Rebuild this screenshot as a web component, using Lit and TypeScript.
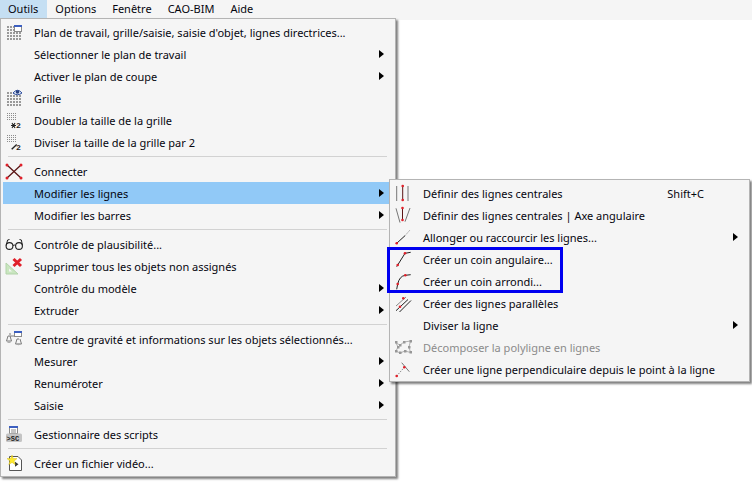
import { LitElement, html, css, svg } from "lit";
import { customElement } from "lit/decorators.js";

const dots = (x0: number, y0: number, nx: number, ny: number, fill = "#999", step = 3, size = 2) => {
  const out = [];
  for (let j = 0; j < ny; j++)
    for (let i = 0; i < nx; i++)
      out.push(svg`<rect x=${x0 + i * step} y=${y0 + j * step} width=${size} height=${size} fill=${fill}></rect>`);
  return out;
};
const red = (x: number, y: number, r = 1.3) => svg`<circle cx=${x} cy=${y} r=${r} fill="#e0202a"></circle>`;
const win = (x: number, y: number, w: number, h: number) => svg`
  <rect x=${x + 0.5} y=${y + 0.5} width=${w - 1} height=${h - 1} fill="#fff" stroke="#8a8a8a"></rect>
  <rect x=${x} y=${y} width=${w} height="2" fill="#3c5fc0"></rect>`;

const icons: Record<string, unknown> = {
  plan: svg`${dots(2, 5, 5, 5)}${win(9, 4, 8, 7)}`,
  grille: svg`${dots(2, 5, 5, 5)}
    <path d="M8 6 Q12.5 0.5 17 6 Q12.5 9.5 8 6Z" fill="#dfe8f7" stroke="#2f4f9f"></path><circle cx="12.5" cy="5" r="1.8" fill="#27407f"></circle>`,
  double: svg`${dots(2, 4, 5, 4, "#8c8c8c", 2, 1)}
    <path d="M6 16.5 H11 M7 14 L10 19 M10 14 L7 19" stroke="#222" stroke-width="1.1"></path>
    <text x="11.2" y="19.3" class="tiny">2</text>`,
  half: svg`${dots(2, 4, 5, 4, "#8c8c8c", 2, 1)}
    <path d="M6.7 18.3 L11.7 13.5" stroke="#222" stroke-width="1.4"></path><text x="11.2" y="19.3" class="tiny">2</text>`,
  connect: svg`<path d="M2 5 L16 18 M16 5 L2 18" stroke="#5a1515" stroke-width="1.3"></path>
    ${red(2, 5, 1.5)}${red(16, 5, 1.5)}${red(2, 18, 1.5)}${red(16, 18, 1.5)}`,
  glasses: svg`<circle cx="4.5" cy="13" r="3.4" fill="none" stroke="#222" stroke-width="1.1"></circle>
    <circle cx="14" cy="13" r="3.4" fill="none" stroke="#222" stroke-width="1.1"></circle>
    <path d="M8 12.5 Q9.2 11.5 10.6 12.5 M1.2 12.5 L2.6 7 L4.5 6.5 M17.4 12.5 L16.4 7 L14.5 6.5" fill="none" stroke="#222" stroke-width="1"></path>`,
  purge: svg`<path d="M1 19 L1 8 L13 19Z" fill="#c9e6bf" stroke="#b3d3aa"></path><path d="M4 16.5 L4 13.5 L7 16.5Z" fill="#f5f5f5"></path>
    <path d="M8.5 4 L16 11 M16 4 L8.5 11" stroke="#e0202a" stroke-width="3"></path>`,
  gravity: svg`${win(9, 3, 8, 6)}
    <path d="M5 5 V7 M3 8 H9 M13 10 V12 M3 8 L1.5 13 H6.5 L5 8 M12 11 L10.5 16 H16.5 L15 11" fill="none" stroke="#7c7c7c"></path>
    <path d="M1.5 13.5 H6.5 Q4 16.5 1.5 13.5Z M10.5 15.5 H16.5 Q13.5 19 10.5 15.5Z" fill="#a8a8a8"></path>`,
  script: svg`${win(4, 3, 9, 8)}<path d="M6 7 H11 M6 9 H11" stroke="#8a8a8a"></path>
    <rect x="1" y="10.5" width="16" height="8.5" rx="1.5" fill="#c4c4c4"></rect>
    <text x="1.6" y="17.5" class="sc">&gt;SC</text>`,
  video: svg`<path d="M4.5 4.5 H13 L16.5 8 V18.5 H4.5Z" fill="#fff" stroke="#555"></path>
    <path d="M10 9.7 L13.5 12.2 L10 14.7Z" fill="#333"></path>
    <path d="M7 3 L8.2 6.6 L12 6.6 L9 9 L10.2 12.6 L7 10.4 L3.8 12.6 L5 9 L2 6.6 L5.8 6.6Z" fill="#ffe92e" stroke="#d8c21a" stroke-width=".5"></path>`,
  central: svg`<path d="M2.7 4 V19 M14 4 V19" stroke="#777" stroke-width="1"></path><path d="M8.7 3.5 V18" stroke="#5a1515" stroke-width="1"></path>${red(8.7, 4)}${red(8.7, 18)}`,
  angled: svg`<path d="M2 4.3 L6 18.6 M16 4 L11 17.7" stroke="#777" stroke-width="1"></path><path d="M8.5 4 V16" stroke="#5a1515" stroke-width="1"></path>${red(8.5, 4)}${red(8.5, 16)}`,
  extend: svg`<path d="M2.7 17.3 L11 9.7" stroke="#222" stroke-width="1"></path><path d="M11 9.7 L16 4" stroke="#888" stroke-dasharray="1.4 1.4"></path>${red(2.7, 17.3)}`,
  angular: svg`<path d="M2.7 18.7 L3.7 17 L11 5.3 L16.7 4.3" fill="none" stroke="#222" stroke-width="1"></path>${red(3.7, 17)}${red(11, 5.3)}`,
  rounded: svg`<path d="M2.7 19.3 L3.7 14 Q5.5 6 11.3 5.3 L16.7 4.7" fill="none" stroke="#222" stroke-width="1"></path>${red(3.7, 14)}${red(11.3, 5.3)}`,
  parallel: svg`<path d="M2 18.7 L14 7.5 M5.5 20 L17 8.5" stroke="#222" stroke-width="1"></path><path d="M2 14 L12 5" stroke="#888" stroke-width="1"></path>${red(9.3, 6.3)}${red(6, 14.7)}`,
  poly: svg`<path d="M2 7 L6 9 L10 6 L16.5 5 L15 11 L16.5 16.5 L11 15 L6 17 L2 15 L4 11Z" fill="none" stroke="#b0b0b0"></path>
    ${[[2, 6], [6, 9], [10, 6], [16.5, 5], [15, 11], [16.5, 16], [11, 15], [6, 16.5], [2, 15], [4, 11]].map(([x, y]) => svg`<rect x=${x - 1} y=${y - 1} width="2.5" height="2.5" fill="#979797"></rect>`)}`,
  perp: svg`<path d="M2.7 18 L10.3 9.3" stroke="#888" stroke-dasharray="1.4 1.2"></path><path d="M7.7 4.7 L15.3 13.7" stroke="#777"></path>${red(2.7, 18)}${red(10.3, 9.3)}`,
};

type Row = { label?: string; icon?: string; arrow?: boolean; active?: boolean; disabled?: boolean; key?: string; sep?: boolean };

const mainRows: Row[] = [
  { label: "Plan de travail, grille/saisie, saisie d'objet, lignes directrices...", icon: "plan" },
  { label: "Sélectionner le plan de travail", arrow: true },
  { label: "Activer le plan de coupe", arrow: true },
  { label: "Grille", icon: "grille" },
  { label: "Doubler la taille de la grille", icon: "double" },
  { label: "Diviser la taille de la grille par 2", icon: "half" },
  { sep: true },
  { label: "Connecter", icon: "connect" },
  { label: "Modifier les lignes", arrow: true, active: true },
  { label: "Modifier les barres", arrow: true },
  { sep: true },
  { label: "Contrôle de plausibilité...", icon: "glasses" },
  { label: "Supprimer tous les objets non assignés", icon: "purge" },
  { label: "Contrôle du modèle", arrow: true },
  { label: "Extruder", arrow: true },
  { sep: true },
  { label: "Centre de gravité et informations sur les objets sélectionnés...", icon: "gravity" },
  { label: "Mesurer", arrow: true },
  { label: "Renuméroter", arrow: true },
  { label: "Saisie", arrow: true },
  { sep: true },
  { label: "Gestionnaire des scripts", icon: "script" },
  { sep: true },
  { label: "Créer un fichier vidéo...", icon: "video" },
];

const subRows: Row[] = [
  { label: "Définir des lignes centrales", icon: "central", key: "Shift+C" },
  { label: "Définir des lignes centrales | Axe angulaire", icon: "angled" },
  { label: "Allonger ou raccourcir les lignes...", icon: "extend", arrow: true },
  { label: "Créer un coin angulaire...", icon: "angular" },
  { label: "Créer un coin arrondi...", icon: "rounded" },
  { label: "Créer des lignes parallèles", icon: "parallel" },
  { label: "Diviser la ligne", arrow: true },
  { label: "Décomposer la polyligne en lignes", icon: "poly", disabled: true },
  { label: "Créer une ligne perpendiculaire depuis le point à la ligne", icon: "perp" },
];

@customElement("app-root")
export class AppRoot extends LitElement {
  static styles = css`
    :host {
      display: block;
      position: relative;
      width: 752px;
      height: 502px;
      overflow: hidden;
      background: #fff;
      font-family: "Noto Sans", sans-serif;
      font-size: 11px;
      color: #05050f;
    }
    .bar {
      display: flex;
      height: 20px;
      background: #f5f5f5;
      align-items: flex-start;
    }
    .top {
      padding: 0 8px;
      height: 18px;
      line-height: 18px;
    }
    .top.open { background: #c5dff3; padding-right: 9px; }
    .popup {
      position: absolute;
      box-sizing: border-box;
      background: #f5f5f5;
      border: 1px solid #b4b4b4;
      padding: 2px 2px 1px;
      box-shadow: 2px 2px 2px rgba(0, 0, 0, 0.5);
    }
    .main { left: 0; top: 18px; width: 396px; height: 459px; }
    .sub { left: 389px; top: 179px; width: 361px; height: 203px; }
    .row {
      display: grid;
      grid-template-columns: 18px 1fr auto 14px;
      align-items: center;
      height: 22px;
      padding-left: 2px;
      white-space: nowrap;
    }
    .row.active { background: #91c9f7; }
    .row.disabled { color: #8b8b8b; }
    .row svg { display: block; width: 18px; height: 22px; overflow: visible; }
    .label { padding-left: 11px; }
    .key { padding-right: 29px; }
    .arrow {
      width: 0;
      height: 0;
      border-left: 5px solid #000;
      border-top: 4px solid transparent;
      border-bottom: 4px solid transparent;
    }
    .sep {
      height: 1px;
      margin: 3px 6px 3px 5px;
      background: #d2d2d2;
    }
    .tiny { font: bold 8px "Liberation Sans", sans-serif; fill: #222; }
    .sc { font: bold 7px "Liberation Mono", monospace; fill: #222; }
    .mark {
      position: absolute;
      box-sizing: border-box;
      left: 387px;
      top: 247px;
      width: 176px;
      height: 46px;
      border: 3px solid #0000f0;
    }
  `;

  private renderRows(rows: Row[]) {
    return rows.map((r) =>
      r.sep
        ? html`<div class="sep"></div>`
        : html`<div class="row ${r.active ? "active" : ""} ${r.disabled ? "disabled" : ""}">
            ${r.icon ? html`<svg viewBox="0 0 18 22">${icons[r.icon]}</svg>` : html`<span></span>`}
            <span class="label">${r.label}</span>
            <span class="key">${r.key ?? ""}</span>
            ${r.arrow ? html`<span class="arrow"></span>` : html`<span></span>`}
          </div>`
    );
  }

  render() {
    return html`
      <div class="bar">
        <div class="top open">Outils</div>
        <div class="top">Options</div>
        <div class="top">Fenêtre</div>
        <div class="top">CAO-BIM</div>
        <div class="top">Aide</div>
      </div>
      <div class="popup main">${this.renderRows(mainRows)}</div>
      <div class="popup sub">${this.renderRows(subRows)}</div>
      <div class="mark"></div>
    `;
  }
}
